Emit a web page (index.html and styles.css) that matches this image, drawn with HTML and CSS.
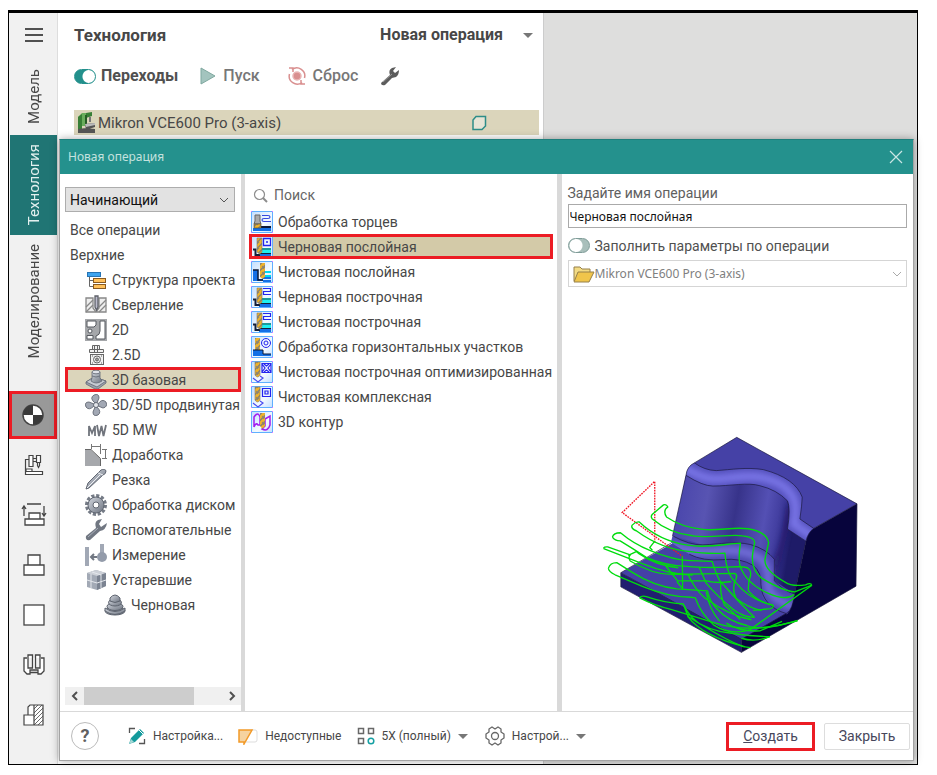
FILE: index.html
```html
<!DOCTYPE html>
<html lang="ru">
<head>
<meta charset="utf-8">
<title>Новая операция</title>
<link rel="stylesheet" href="styles.css">
</head>
<body>
<svg class="defs" aria-hidden="true">
  <defs>
    <linearGradient id="steel" x1="0" y1="0" x2="1" y2="1"><stop offset="0" stop-color="#d3d7df"/><stop offset="1" stop-color="#6d7480"/></linearGradient>
    <linearGradient id="tile" x1="0" y1="0" x2="1" y2="1"><stop offset="0" stop-color="#c4dfff"/><stop offset=".6" stop-color="#f4faff"/><stop offset="1" stop-color="#c4dfff"/></linearGradient>
    <pattern id="twist" width="6" height="6" patternUnits="userSpaceOnUse"><rect width="6" height="6" fill="#8b8370"/><path d="M-1 5L5 -1M1 8L8 1" stroke="#f0b428" stroke-width="2"/></pattern>
    <symbol id="frame" viewBox="0 0 22 22"><rect x=".5" y=".5" width="21" height="21" fill="url(#tile)" stroke="#5fb0ff"/><path d="M0 1V0H1M21 0H22V1M0 21V22H1M21 22H22V21" fill="none" stroke="#ee6cff" stroke-width="2"/></symbol>
    <symbol id="rough" viewBox="0 0 22 22"><rect x="8" y="18" width="12" height="3" fill="#1470e6"/><rect x="8" y="12" width="12" height="2" fill="#1c9a9c"/><rect x="8" y="14" width="12" height="3" fill="#1ef0f0"/><path d="M8 17.500H20" stroke="#12203c"/><path d="M2 13.500H4.500V19H9" fill="none" stroke="#12203c" stroke-width="2"/><path d="M6 2H11V16L8.500 18L6 16Z" fill="url(#twist)" stroke="#837b68" stroke-width=".6"/></symbol>
    <symbol id="ball" viewBox="0 0 22 22"><path d="M4 1H9V14Q6.500 18 4 14Z" fill="url(#twist)" stroke="#837b68" stroke-width=".6"/><path d="M2 17L7 21L12 17L9 15" fill="none" stroke="#4a4df0" stroke-width="1.200"/></symbol>
  </defs>
</svg>

<div class="window">
  <nav class="rail" aria-label="Разделы">
    <button class="menu" aria-label="Меню"><svg width="20" height="18" viewBox="0 0 20 18"><path d="M1 3H19M1 9H19M1 15H19" stroke="#505050" stroke-width="2"/></svg></button>
    <button class="tab tab-model"><span>Модель</span></button>
    <button class="tab tab-active"><span>Технология</span></button>
    <button class="tab tab-sim"><span>Моделирование</span></button>
    <div class="tools">
      <button class="tool tool-active" aria-label="Базовая точка"><svg width="24" height="24" viewBox="0 0 24 24"><circle cx="12" cy="12" r="10" fill="#fff" stroke="#444" stroke-width="1.500"/><path d="M12 12V2A10 10 0 0 0 2 12ZM12 12V22A10 10 0 0 0 22 12Z" fill="#3a3a3a"/></svg></button>
      <button class="tool" aria-label="Станок"><svg width="24" height="24" viewBox="0 0 24 24" fill="#fff" stroke="#444" stroke-width="1.200"><path fill="none" d="M3.500 18V6.500H7M11 5.500H15M11 8.500H15"/><path d="M7 2.500H11V13.500H7ZM14.500 2.500H18.500V9.500H14.500ZM15.500 9.500V12.500L16.500 14.500L17.500 12.500V9.500M3.500 18.500H20.500V21.500H3.500ZM4 18.500V16H10V18.500"/></svg></button>
      <button class="tool" aria-label="Переустановка"><svg width="26" height="26" viewBox="0 0 26 26" fill="#fff" stroke="#444" stroke-width="1.300"><path d="M4 17H23V23H4ZM8 11H19V17H8ZM6 2H20"/><path fill="none" d="M3 14V5M1 7L3 4L5 7M23 4V13M21 11L23 14L25 11"/></svg></button>
      <button class="tool" aria-label="Деталь"><svg width="24" height="24" viewBox="0 0 24 24" fill="#fff" stroke="#444" stroke-width="1.300"><path d="M2 12H22V22H2ZM6 2H18V12H6Z"/></svg></button>
      <button class="tool" aria-label="Заготовка"><svg width="24" height="24" viewBox="0 0 24 24"><rect x="2" y="2" width="20" height="20" fill="#fff" stroke="#444" stroke-width="1.300"/></svg></button>
      <button class="tool" aria-label="Оснастка"><svg width="24" height="24" viewBox="0 0 24 24" fill="#fff" stroke="#444" stroke-width="1.300"><path d="M5 5H2V18L5 21H8V17H16V21H19L22 18V5H19M8 19.500H16M6 2H10.500V15H6ZM13.500 2H18V15H13.500Z"/></svg></button>
      <button class="tool" aria-label="Сечение"><svg width="24" height="24" viewBox="0 0 24 24" fill="#fff" stroke="#444" stroke-width="1.200"><path d="M2 12H12V22H2ZM6 12V4L8 2H12V12M12 2H21V22H12Z"/><path stroke-width=".8" d="M12 6L16 2M12 10L20 2M12 14L21 5M12 18L21 9M12 22L21 13M16 22L21 17"/></svg></button>
    </div>
  </nav>

  <section class="panel">
    <header class="panel-head">
      <h1>Технология</h1>
      <button class="new-op">Новая операция <span class="caret"></span></button>
    </header>
    <div class="toolbar">
      <label class="switch-label"><input type="checkbox" class="switch" checked> Переходы</label>
      <button class="run"><svg width="16" height="20" viewBox="0 0 16 20"><path d="M1 2L15 10L1 18Z" fill="#a3c4be" stroke="#7fa89f"/></svg>Пуск</button>
      <button class="reset"><svg width="18" height="20" viewBox="0 0 18 20" fill="none" stroke="#d98f8f" stroke-width="1.500"><circle cx="9" cy="10" r="4" fill="#d98f8f" stroke="#e9b5b5"/><path d="M4 3.500A8 8 0 0 1 16.500 12M14 16.500A8 8 0 0 1 1.500 8M1 2H5V6M17 18H13V14"/></svg>Сброс</button>
      <button class="wrench" aria-label="Параметры"><svg width="20" height="20" viewBox="0 0 20 20"><path d="M1 17L10 9Q8 4 12 2L16 1L13 5L15 7L19 4Q19 9 16 11L12 12L5 19Q1 20 1 17Z" fill="#5c5c5c"/><path d="M3 16L12 8" stroke="#999"/></svg></button>
    </div>
    <div class="machine">
      <svg width="20" height="22" viewBox="0 0 20 22"><path d="M1 5L5 1H9V14H1Z" fill="#69ad5c"/><path d="M9 1L15 0V4L9 6ZM1 5L5 2V18H1Z" fill="#387f36"/><path d="M9 3V12" stroke="#255b25" stroke-width="2"/><path d="M12 5H14V10H12Z" fill="#777"/><path d="M8 12L18 11V15L9 18ZM1 17L9 16L18 17V21H1Z" fill="#555"/><path d="M8 12L18 11V13L9 15Z" fill="#bbb"/></svg>
      <span>Mikron VCE600 Pro (3-axis)</span>
      <svg class="leaf" width="16" height="16" viewBox="0 0 16 16"><path d="M2 14.500V5L5 1.500H14.500V11L11 14.500Z" fill="#e6e4d5" stroke="#2d8d88" stroke-width="1.500"/></svg>
    </div>
  </section>

  <div class="dialog" role="dialog" aria-labelledby="dlg-title">
    <header class="titlebar"><h2 id="dlg-title">Новая операция</h2><button aria-label="Закрыть окно"><svg width="14" height="14" viewBox="0 0 14 14"><path d="M1 1L13 13M13 1L1 13" stroke="#c9e6e4" stroke-width="1.200"/></svg></button></header>
    <div class="body">
      <section class="groups">
        <select class="level" aria-label="Уровень"><option>Начинающий</option></select>
        <ul class="list tree">
          <li><button>Все операции</button></li>
          <li><button>Верхние</button></li>
          <li class="sub"><button><svg viewBox="0 0 22 22"><path d="M4.500 7V17.500H9M4.500 11.500H9" fill="none" stroke="#666"/><rect x="2.500" y="3.500" width="13" height="4" fill="#3fa4ee" stroke="#2774b4"/><rect x="8.500" y="9.500" width="12" height="4" fill="#ffc05a" stroke="#895a20"/><rect x="8.500" y="15.500" width="12" height="4" fill="#ffc05a" stroke="#895a20"/></svg>Структура проекта</button></li>
          <li class="sub"><button><svg viewBox="0 0 22 22" fill="none" stroke="#888" stroke-width="1.300"><path fill="#eee" d="M1 4H8V14L11 18L14 14V4H21V18H1Z"/><path d="M1 13L8 6M1 18L8 11M14 13L21 6M14 18L21 11"/><path stroke="#5d6068" fill="#bbc" d="M10 2H13V13L11.500 16L10 13Z"/></svg>Сверление</button></li>
          <li class="sub"><button><svg viewBox="0 0 22 22"><rect width="22" height="22" fill="#a5a7aa"/><path d="M2 2H11V6L9 8H2ZM15 2H20V20H11V17Q15 16 15 12Z" fill="#fff" stroke="#55585e"/><circle cx="5" cy="12" r="2" fill="#fff" stroke="#55585e"/><path d="M2 16.500H8V20H2Z" fill="#fff" stroke="#55585e"/></svg>2D</button></li>
          <li class="sub"><button><svg viewBox="0 0 22 22" fill="#f1f1f1" stroke="#666"><path d="M4.500 5.500H18.500V8.500H4.500ZM7.500 1.500H14.500V5.500H7.500ZM9.500 1V8M12.500 1V8"/><rect x="5.500" y="10.500" width="13" height="10"/><circle cx="12" cy="15.500" r="3.500"/><circle cx="12" cy="15.500" r="1.500" fill="#999"/><path d="M7 12H8M16 12H17M7 19H8M16 19H17"/></svg>2.5D</button></li>
          <li class="sub picked marked"><button><svg viewBox="0 0 22 22" stroke="#626873" stroke-width=".8"><path d="M1 13L9 8L21 12V14L13 20H10L1 15Z" fill="#9aa0ac"/><path d="M1 13L9 8L21 12L12 18Z" fill="#c6cad2"/><path d="M6 12Q11 16 17 12L15 9V3H7V9Z" fill="url(#steel)"/><ellipse cx="11" cy="3" rx="4" ry="1.800" fill="#dfe2e8"/><path d="M7 7Q11 9 15 7" fill="none"/></svg>3D базовая</button></li>
          <li class="sub"><button><svg viewBox="0 0 22 22" fill="#a2a8b4" stroke="#626873" stroke-width=".9"><path d="M10 9Q4 4 9 1Q14 -1 14 4L12 9ZM13 10Q17 4 21 8Q23 13 18 14L13 12ZM12 13Q17 18 13 21Q8 23 8 18L10 13ZM9 12Q4 17 1 13Q-1 8 4 8L9 10Z"/><circle cx="11" cy="11" r="2.500" fill="#e5e7ec"/></svg>3D/5D продвинутая</button></li>
          <li class="sub"><button><svg viewBox="0 0 22 22" fill="none" stroke="#70747c" stroke-width="1.800"><path d="M4 17V7L7 14L10 7V17M12 6L14 17L16.500 7L18.500 17L21 6"/></svg>5D MW</button></li>
          <li class="sub"><button><svg viewBox="0 0 22 22"><path d="M0 6H6L15 14V22H0Z" fill="#a6a8ac"/><path d="M0 5.500H6L15.500 14.500V22" fill="none" stroke="#666"/><path d="M6.500 0V5M15.500 0V10M7 2.500H15M17 5.500H22M17 14.500H22M20.500 6V14" fill="none" stroke="#777"/></svg>Доработка</button></li>
          <li class="sub"><button><svg viewBox="0 0 22 22"><path d="M1 20L3 14L16 1Q20 -1 21 2Q21 5 18 6L4 19Z" fill="url(#steel)" stroke="#626873"/><path d="M2 19L15 6M13 4L18 6" stroke="#eef0f4"/></svg>Резка</button></li>
          <li class="sub"><button><svg viewBox="0 0 22 22"><circle cx="11" cy="11" r="9" fill="none" stroke="#757b86" stroke-width="4" stroke-dasharray="3 1.700"/><circle cx="11" cy="11" r="8" fill="url(#steel)" stroke="#626873"/><circle cx="11" cy="11" r="3" fill="#fff" stroke="#626873"/></svg>Обработка диском</button></li>
          <li class="sub"><button><svg viewBox="0 0 22 22"><path d="M1 17L11 9Q9 3 13 1L17 0L14 5L16 8L22 4Q21 11 15 12L5 21Q0 22 1 17Z" fill="#717782"/><path d="M3 18L13 9" stroke="#a9afba"/></svg>Вспомогательные</button></li>
          <li class="sub"><button><svg viewBox="0 0 22 22"><path d="M0 3H4V22H0ZM15 0H19V10H15Z" fill="#a1a8b5"/><circle cx="17" cy="13" r="5" fill="#939baa"/><path d="M6 13H12M9 10L6 13L9 16" fill="none" stroke="#717782" stroke-width="2"/></svg>Измерение</button></li>
          <li class="sub"><button><svg viewBox="0 0 22 22"><path d="M2 4L11 1L21 4V17L12 21L2 18Z" fill="#a2a9b5"/><path d="M2 4L12 7L21 4L11 1Z" fill="#cdd1d8"/><path d="M12 7V21L21 17V4Z" fill="#7b8391"/><path d="M6 5V19M16 5V19M2 11L12 14L21 11M7 3L16 6" fill="none" stroke="#e4e7ec"/></svg>Устаревшие</button></li>
          <li class="leaf-item"><button><svg viewBox="0 0 22 22" fill="url(#steel)" stroke="#5d636e"><ellipse cx="11" cy="17" rx="10" ry="4"/><path d="M1 14Q11 21 21 14V17Q11 24 1 17Z"/><ellipse cx="11" cy="12.500" rx="8" ry="4"/><ellipse cx="11" cy="8.500" rx="6.500" ry="3.500"/><path d="M6 7V4Q11 -2 16 4V7Q11 10 6 7Z"/></svg>Черновая</button></li>
        </ul>
        <div class="scroll"><button aria-label="Влево"><svg width="8" height="10" viewBox="0 0 8 10"><path d="M6 1L2 5L6 9" fill="none" stroke="#505050" stroke-width="2"/></svg></button><div class="track"><div class="thumb"></div></div><button aria-label="Вправо"><svg width="8" height="10" viewBox="0 0 8 10"><path d="M2 1L6 5L2 9" fill="none" stroke="#505050" stroke-width="2"/></svg></button></div>
      </section>

      <section class="ops">
        <label class="search"><svg width="16" height="16" viewBox="0 0 16 16" fill="none" stroke="#8c8c8c"><circle cx="6.500" cy="7.500" r="5" stroke-width="1.200"/><path d="M10 11L14 15" stroke-width="2"/></svg><input type="search" placeholder="Поиск" aria-label="Поиск"></label>
        <ul class="list">
          <li><button><svg viewBox="0 0 22 22"><use href="#frame"/><path d="M2 17H20V20H2Z" fill="#1470e6"/><path d="M10 16H20" stroke="#0b1836" stroke-width="2"/><path d="M4 4H9V10L10 13H3L4 10Z" fill="#aaa" stroke="#666"/><path d="M3 13H10V17H3Z" fill="url(#twist)" stroke="#5a4820" stroke-width=".6"/><path d="M11 4.500H17Q19 4.500 19 6Q19 7.500 17 7.500H13Q11 7.500 11 9Q11 10.500 13 10.500H20" fill="none" stroke="#3548df" stroke-width="1.200"/></svg>Обработка торцев</button></li>
          <li class="picked marked"><button><svg viewBox="0 0 22 22"><use href="#frame"/><use href="#rough"/><path d="M12.500 2.500H19.500V9.500H12.500ZM15 6H17" fill="none" stroke="#2424ef" stroke-width="1.300"/></svg>Черновая послойная</button></li>
          <li><button><svg viewBox="0 0 22 22"><use href="#frame"/><path d="M2 9H7V18H12V20H2Z" fill="#1470e6"/><path d="M11 11H20M11 15H20" stroke="#00d9f0" stroke-width="2"/><path d="M12 17H20M12 20H20" stroke="#1470e6" stroke-width="2"/><path d="M2 9H7V19H12" fill="none" stroke="#0b1836" stroke-width="1.500"/><path d="M9 2H14V16L11.500 18L9 16Z" fill="url(#twist)"/></svg>Чистовая послойная</button></li>
          <li><button><svg viewBox="0 0 22 22"><use href="#frame"/><use href="#rough"/><path d="M12 2.500H19.500V5.500H12.500V8.500H20" fill="none" stroke="#2424ef" stroke-width="1.200"/></svg>Черновая построчная</button></li>
          <li><button><svg viewBox="0 0 22 22"><use href="#frame"/><use href="#rough"/><path d="M12 2.500H19.500V5.500H12.500V8.500H20" fill="none" stroke="#2424ef" stroke-width="1.200"/></svg>Чистовая построчная</button></li>
          <li><button><svg viewBox="0 0 22 22"><use href="#frame"/><path d="M4 2H9V14H4Z" fill="url(#twist)"/><path d="M2 14H12V18H20V20H2Z" fill="#1470e6"/><path d="M2 14H12V18H20" fill="none" stroke="#0b1836"/><circle cx="15" cy="7" r="4.500" fill="none" stroke="#2424ef"/><circle cx="15" cy="7" r="2" fill="none" stroke="#2424ef"/></svg>Обработка горизонтальных участков</button></li>
          <li><button><svg viewBox="0 0 22 22"><use href="#frame"/><use href="#ball"/><path d="M11 2.500H20V11.500H11ZM11 3L14 7L11 11M20 3L17 7L20 11M13 3L15.500 5L18 3M13 11L15.500 9L18 11" fill="none" stroke="#2424ef" stroke-width="1.200"/></svg>Чистовая построчная оптимизированная</button></li>
          <li><button><svg viewBox="0 0 22 22"><use href="#frame"/><use href="#ball"/><path d="M11.500 2.500H19.500V10.500H11.500ZM14 5H17V8H14Z" fill="none" stroke="#2424ef" stroke-width="1.200"/></svg>Чистовая комплексная</button></li>
          <li><button><svg viewBox="0 0 22 22"><use href="#frame"/><path d="M3 16V6Q7 0 9 6V14H7Q5 11 3 16M14 8L19 5V14Q17 21 11 18L14 15Z" fill="none" stroke="#a11df0" stroke-width="1.500"/><path d="M9 2H14V15L11.500 18L9 15Z" fill="url(#twist)"/></svg>3D контур</button></li>
        </ul>
      </section>

      <section class="details">
        <label for="op-name">Задайте имя операции</label>
        <input id="op-name" class="name" type="text" value="Черновая послойная">
        <label class="fill"><input type="checkbox" class="switch"> Заполнить параметры по операции</label>
        <div class="source">
          <svg width="22" height="18" viewBox="0 0 22 18"><path d="M1 16V2H7L9 4H17V7" fill="#f3db84" stroke="#96804a"/><path d="M1 17L5 7H21L16 17Z" fill="#f0c54b" stroke="#96804a"/></svg>
          <select aria-label="Исходная операция" disabled><option>Mikron VCE600 Pro (3-axis)</option></select>
        </div>
        <div class="preview">
          <svg viewBox="130 50 770 655" role="img" aria-label="Траектория послойной обработки">
            <defs>
              <linearGradient id="wall" gradientUnits="userSpaceOnUse" x1="350" y1="260" x2="700" y2="320"><stop offset="0" stop-color="#4a46ac"/><stop offset=".25" stop-color="#5854b2"/><stop offset=".5" stop-color="#37338a"/><stop offset=".75" stop-color="#5450b4"/><stop offset=".9" stop-color="#3d399a"/><stop offset="1" stop-color="#1e1b68"/></linearGradient>
              <filter id="soft" x="-20%" y="-40%" width="140%" height="180%"><feGaussianBlur stdDeviation="9"/></filter>
              <clipPath id="rim"><path d="M380 170Q383 143 405 133Q435 155 470 156C515 153 560 145 610 153Q705 178 726 235Q725 260 719 300L760 328Q743 340 737 366L682 330Q692 260 682 246Q650 213 600 201C565 190 510 202 460 202Q430 202 380 170Z"/></clipPath>
              <clipPath id="step"><path d="M335 370L340 350Q390 378 430 377C485 375 520 365 572 376Q620 390 643 420Q648 450 643 484Q670 515 703 523Q696 570 680 584Q620 562 607 530L603 495Q606 460 580 438Q540 415 490 421Q430 426 390 405Z"/></clipPath>
            </defs>
            <path d="M531 57L889 255L760 328L737 366L703 523L690 575L545 660L186 460L340 372L380 170L405 133Z" fill="#4541a6"/>
            <path d="M889 255L886 500L545 697V658L680 580Q692 575 703 523L737 366Q743 336 760 328Z" fill="#07043c"/>
            <path d="M186 460L545 658V697L186 502Z" fill="#211e70"/>
            <path d="M380 170Q430 202 460 202C510 202 565 190 600 201Q650 213 682 246Q695 270 682 330L737 366L703 523L643 484V420Q610 385 572 376C520 365 485 375 430 377L340 350Z" fill="url(#wall)"/>
            <path d="M682 246Q695 270 682 330L643 484V425Q674 350 682 246Z" fill="#12104c" opacity=".75" filter="url(#soft)"/>
            <g clip-path="url(#rim)"><rect x="370" y="120" width="400" height="260" fill="#5450bc"/><path d="M370 145Q430 180 465 181C520 179 570 165 620 180Q690 200 704 250Q710 290 700 314L760 355" fill="none" stroke="#827ef0" stroke-width="24" opacity=".85" filter="url(#soft)"/></g>
            <g clip-path="url(#step)"><rect x="320" y="340" width="400" height="250" fill="#4c48ae"/><path d="M330 376Q390 400 450 398C505 390 570 390 610 425Q630 455 623 500Q640 545 700 560" fill="none" stroke="#7f7be6" stroke-width="22" opacity=".8" filter="url(#soft)"/></g>
            <g fill="none" stroke="#19183b" stroke-width="2">
              <path d="M340 350L380 170Q383 143 405 133L531 57L889 255L760 328Q743 340 737 366L703 523Q698 570 680 580L545 658L186 460L335 372M889 255L886 500L545 697L186 502V460M545 658V697"/>
              <path d="M405 133Q435 155 470 156C515 153 560 145 610 153Q705 178 726 235Q725 260 719 300L760 328M380 170Q430 202 460 202C510 202 565 190 600 201Q650 213 682 246Q692 270 682 330L737 366M340 350Q390 378 430 377C485 375 520 365 572 376Q620 390 643 420V484Q670 515 703 523M390 405Q430 426 490 421Q540 415 580 438Q606 460 603 495Q606 560 680 582"/>
            </g>
            <path d="M287 370V188L190 281L369 411V425" fill="none" stroke="#f01624" stroke-width="4" stroke-dasharray="5 3"/>
            <g fill="none" stroke="#00dc0d" stroke-width="4" stroke-linejoin="round">
              <path d="M326 264Q322 255 313 258L280 286Q274 292 279 299Q330 342 400 350C450 358 515 344 548 350Q588 355 584 372L579 400Q571 448 605 476Q670 515 704 517Q735 505 754 497Q752 488 736 496Q695 502 675 488Q612 453 615 420L626 370Q620 338 565 329C520 323 475 336 430 331Q365 324 322 294Q310 275 326 264Z"/>
              <path d="M219 319Q230 307 241 309Q300 365 385 378C440 388 500 374 542 372Q535 417 541 441Q560 492 622 520Q675 545 702 525M219 319Q216 329 232 335Q310 392 395 397C430 404 470 402 496 402Q500 465 529 490Q570 540 638 557"/>
              <path d="M161 354Q164 341 185 341Q225 375 274 394Q340 422 394 424L458 426Q468 460 480 483Q530 540 584 593M161 354Q168 365 184 365Q225 390 262 414Q318 439 384 441C460 450 520 439 552 443Q576 445 572 469Q564 490 566 514Q595 548 638 556Q644 561 632 567L580 572"/>
              <path d="M135 388Q135 382 147 383L214 407Q207 414 214 425Q280 465 336 465L525 462Q533 467 530 475C520 490 519 519 529 536Q560 562 605 573M135 388L248 432Q330 465 400 467M208 408L232 397L240 403Q290 438 357 445"/>
              <path d="M149 447Q154 430 174 430L219 458Q285 500 353 508L444 514Q448 542 472 567Q505 604 561 617Q590 630 655 617L712 603M149 447Q150 457 169 466L252 501Q325 531 395 533L408 535Q423 580 462 615Q510 647 570 630L754 498"/>
              <path d="M242 535Q247 527 262 531Q318 550 372 553Q393 600 435 620Q500 660 550 680L572 683M242 535Q287 558 335 569L468 610Q580 644 712 602M372 553L386 590Q450 635 515 640Q585 650 630 650"/>
              <path d="M420 445Q433 474 440 491Q475 532 520 569Q550 592 584 593M386 465Q405 507 436 535Q510 588 575 600M484 490Q480 520 494 555L542 599M353 486L370 508L369 411M287 366L272 385L280 393M440 517Q450 570 480 604M385 590Q430 650 555 680M500 610Q540 636 600 633L666 605M545 655Q585 668 630 650M320 440L355 484H440Q477 493 515 486"/>
            </g>
          </svg>
        </div>
      </section>
    </div>

    <footer class="footer">
      <button class="help" aria-label="Справка">?</button>
      <button class="f-setup"><svg width="18" height="18" viewBox="0 0 18 18"><path d="M1.500 6V1.500H7M16.500 12V16.500H11" fill="none" stroke="#555" stroke-width="1.300"/><path d="M1 17L3 11L12 2L16 6L7 15Z" fill="#149a9c"/><path d="M11 3L15 7" stroke="#fff"/><path d="M1 17L3 12L6 15Z" fill="#a6d8d6"/></svg>Настройка...</button>
      <button class="f-locked"><svg width="20" height="18" viewBox="0 0 20 18"><path d="M13 3H17Q19 3 19 5V13Q19 15 17 15H8" fill="#fff" stroke="#ddd"/><path d="M1 3H14L6 17V15H1Z" fill="#f6d3a0" stroke="#f29a29" stroke-width="1.500"/></svg>Недоступные</button>
      <button class="f-axes"><svg width="18" height="18" viewBox="0 0 18 18" fill="none" stroke="#686868" stroke-width="1.500"><rect x="1.500" y="1.500" width="5" height="5"/><rect x="11.500" y="1.500" width="5" height="5"/><rect x="1.500" y="11.500" width="5" height="5"/><circle cx="14" cy="14" r="2.800" stroke="#16a0a3"/></svg>5X (полный)<span class="caret"></span></button>
      <button class="f-opts"><svg width="20" height="20" viewBox="0 0 20 20" fill="none" stroke="#686868" stroke-width="1.300"><path d="M7 1L10 3L13 1L16 3V6L19 8V12L16 14V17L13 19L10 17L7 19L4 17V14L1 12V8L4 6V3Z" stroke-linejoin="round"/><circle cx="10" cy="10" r="3.500"/></svg>Настрой...<span class="caret"></span></button>
      <button class="action create"><u>С</u>оздать</button>
      <button class="action">Закрыть</button>
    </footer>
  </div>
</div>
</body>
</html>
```
FILE: styles.css
```css
* { box-sizing: border-box; }

body {
  margin: 0;
  padding: 10px 19px 10px 8px;
  height: 100vh;
  background: #fff;
  color: #474747;
  font: 14px/20px Roboto, "Liberation Sans", sans-serif;
}

button, input, select { font: inherit; color: inherit; }
button { padding: 0; border: 0; background: none; text-align: left; }
h1, h2, ul { margin: 0; padding: 0; }
ul { list-style: none; }
svg { flex: none; display: block; }
.defs { position: absolute; width: 0; height: 0; }

.window {
  position: relative;
  display: flex;
  height: 100%;
  border: 1px solid #000;
  border-top-width: 3px;
  background: #dededd;
}

/* Left rail */
.rail {
  display: flex;
  flex-direction: column;
  width: 49px;
  padding-left: 1px;
  background: #f1f1f1;
  border-right: 1px solid #ddd;
}
.menu { display: flex; justify-content: center; align-items: center; height: 44px; }
.tab { display: flex; justify-content: center; align-items: center; font-size: 15px; }
.tab span { writing-mode: vertical-rl; transform: rotate(180deg); }
.tab-model { height: 78px; }
.tab-active { height: 100px; background: #207574; color: #e3f0ef; }
.tab-sim { height: 132px; }
.tools { display: flex; flex-direction: column; margin-top: 23px; }
.tool { display: flex; justify-content: center; align-items: center; height: 50px; }
.tool-active { background: #999; border: 3px solid #ec1c24; margin: 1px 0 1px -1px; height: 48px; }

/* Project panel */
.panel { width: 486px; padding: 0 4px 0 16px; background: #fff; border-right: 1px solid #ccc; }
.panel-head { display: flex; justify-content: space-between; align-items: center; height: 44px; padding-right: 6px; }
.panel-head h1 { font-size: 17px; font-weight: 700; }
.new-op { display: flex; align-items: center; gap: 20px; font-size: 16px; font-weight: 700; }
.caret { border: 5px solid transparent; border-top-color: #777; border-bottom-width: 0; }
.toolbar { display: flex; align-items: center; height: 38px; font-size: 16px; font-weight: 500; color: #777; }
.toolbar button { display: flex; align-items: center; gap: 7px; }
.switch-label { display: flex; align-items: center; gap: 5px; font-weight: 700; color: #505050; }
.run { margin-left: 22px; }
.reset { margin-left: 28px; }
.wrench { margin-left: 22px; }
.machine { display: flex; align-items: center; gap: 1px; height: 25px; margin-top: 15px; padding: 0 52px 0 3px; background: #dbd5bb; font-size: 15px; }
.leaf { margin-left: auto; }

.switch {
  appearance: none;
  flex: none;
  width: 22px;
  height: 15px;
  margin: 0;
  border: 1px solid #7f9c98;
  border-radius: 8px;
  background: radial-gradient(circle at 7px 50%, #fff 6px, #a9bfbb 7px);
}
.switch:checked { border-color: #23908c; background: radial-gradient(circle at 14px 50%, #fff 6px, #23908c 7px); }

/* Dialog */
.dialog {
  position: absolute;
  inset: 126px 3px 3px 50px;
  display: flex;
  flex-direction: column;
  background: #fff;
  border: 1px solid #a3a3a3;
  border-top-color: #1f7f7c;
  box-shadow: 0 0 8px rgba(0, 0, 0, .35);
}
.titlebar { display: flex; align-items: center; justify-content: space-between; height: 34px; padding: 0 10px 0 8px; background: #24918d; color: #c5e2df; }
.titlebar h2 { font: 12px/20px "Noto Sans", sans-serif; }
.body { flex: 1; display: grid; grid-template-columns: 181px minmax(0, 316fr) minmax(0, 357fr); min-height: 0; }

.groups { display: flex; flex-direction: column; padding: 13px 0 6px 5px; }
.level {
  appearance: none;
  width: 170px;
  height: 25px;
  padding: 0 4px;
  border: 1px solid #adadad;
  border-radius: 0;
  color: #111;
  background: #e2e2e2 url("data:image/svg+xml,%3Csvg xmlns='http://www.w3.org/2000/svg' width='10' height='6'%3E%3Cpath d='M1 1L5 5L9 1' fill='none' stroke='%23555'/%3E%3C/svg%3E") no-repeat right 5px center;
}
.tree { margin-top: 5px; }
.list li { height: 25px; }
.list button { display: flex; align-items: center; gap: 5px; width: 100%; height: 100%; white-space: nowrap; }
.list svg { width: 22px; height: 22px; }
.list .picked { background: #dbd5bb; }
.list .marked { outline: 3px solid #ec1c24; outline-offset: -3px; }
.tree button { padding-left: 5px; }
.tree .sub button { padding-left: 20px; }
.tree .leaf-item button { padding-left: 39px; }
.scroll { display: flex; height: 18px; margin-top: auto; background: #f0f0f0; }
.scroll button { display: flex; align-items: center; justify-content: center; width: 19px; }
.track { flex: 1; }
.thumb { width: 80%; height: 100%; background: #cdcdcd; }

.ops { padding: 10px 4px 0 4px; border-left: 4px solid #d9d9d9; }
.search { display: flex; align-items: center; gap: 5px; height: 22px; margin-bottom: 3px; padding-left: 4px; }
.search input { flex: 1; min-width: 0; border: 0; padding: 0; outline: 0; background: none; }
.search input::placeholder { color: #666; opacity: 1; }
.ops .list button { padding-left: 2px; }
.ops .picked { background: #d3caa8; }

.details { display: flex; flex-direction: column; padding: 9px 6px 0 6px; border-left: 5px solid #d9d9d9; color: #606060; }
.name { height: 24px; margin-top: 1px; padding: 0 1px; border: 1px solid #aaa; color: #111; font: 12px/16px "Noto Sans", sans-serif; }
.fill { display: flex; align-items: center; gap: 5px; height: 32px; padding-top: 3px; color: #505050; }
.source { display: flex; align-items: center; height: 27px; padding-left: 4px; border: 1px solid #d5d5d5; }
.source select {
  appearance: none;
  flex: 1;
  height: 100%;
  padding: 0;
  border: 0;
  opacity: 1;
  color: #808080;
  font: 12px/20px "Noto Sans", sans-serif;
  background: url("data:image/svg+xml,%3Csvg xmlns='http://www.w3.org/2000/svg' width='10' height='6'%3E%3Cpath d='M1 1L5 5L9 1' fill='none' stroke='%23aaa'/%3E%3C/svg%3E") no-repeat right 4px center;
}
.preview { display: flex; flex: 1; align-items: flex-end; justify-content: center; padding: 0 12px 56px 0; }
.preview svg { width: 79%; }

.footer { display: flex; align-items: center; height: 49px; padding: 0 3px 0 11px; border-top: 1px solid #d9d9d9; font-size: 12px; }
.footer button { display: flex; align-items: center; gap: 7px; white-space: nowrap; }
.footer .help { justify-content: center; width: 28px; height: 28px; border: 1px solid #bbb; border-radius: 50%; font-size: 18px; font-weight: 700; color: #606060; }
.f-setup { margin-left: 29px; }
.f-locked { margin-left: 15px; }
.f-axes { margin-left: 15px; }
.f-opts { margin-left: 17px; }
.footer .action { justify-content: center; width: 86px; height: 27px; border: 1px solid #ddd; border-radius: 2px; font-size: 14px; color: #47475c; }
.footer .create { width: 89px; height: 29px; gap: 0; margin: 0 9px 0 auto; border: 3px solid #ec1c24; border-radius: 0; }
```
